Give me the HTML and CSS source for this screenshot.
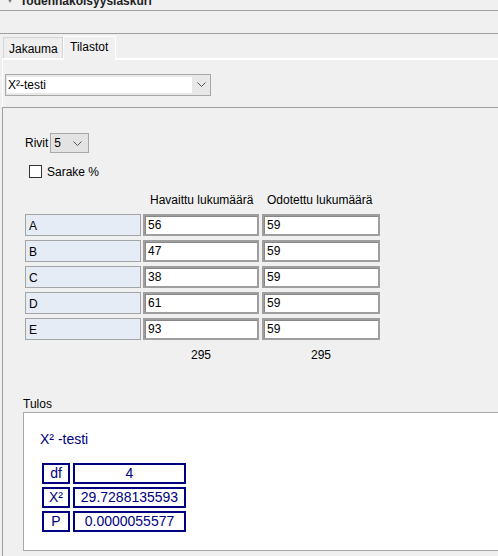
FILE: index.html
```html
<!DOCTYPE html>
<html>
<head>
<meta charset="utf-8">
<link rel="stylesheet" href="styles.css">
</head>
<body>
<div class="app">
  <div class="title"><div class="title-text"><span class="tri">▼</span>Todennäköisyyslaskuri</div></div>
  <div class="toolbar"></div>
  <div class="tabs">
    <div class="tab">Jakauma</div>
    <div class="tab active">Tilastot</div>
  </div>
  <div class="panel">
    <div class="select">
      <div class="select-field">X²-testi</div>
      <div class="select-arrow"><svg width="9" height="5" viewBox="0 0 9 5"><path d="M0.5 0.5 L4.5 4.5 L8.5 0.5" fill="none" stroke="#555" stroke-width="1"/></svg></div>
    </div>
    <div class="inner">
      <div class="rivit-row">
        <span class="lbl">Rivit</span>
        <div class="combo"><span>5</span><svg width="9" height="5" viewBox="0 0 9 5"><path d="M0.5 0.5 L4.5 4.5 L8.5 0.5" fill="none" stroke="#555" stroke-width="1"/></svg></div>
      </div>
      <div class="check-row">
        <span class="checkbox"></span><span>Sarake %</span>
      </div>
      <div class="grid-head">
        <div class="c-label"></div>
        <div class="c-1 head1">Havaittu lukumäärä</div>
        <div class="c-2 head2">Odotettu lukumäärä</div>
      </div>
      <div class="rows">
        <div class="row"><div class="c-label cell-label">A</div><div class="c-1 cell-input">56</div><div class="c-2 cell-input">59</div></div>
        <div class="row"><div class="c-label cell-label">B</div><div class="c-1 cell-input">47</div><div class="c-2 cell-input">59</div></div>
        <div class="row"><div class="c-label cell-label">C</div><div class="c-1 cell-input">38</div><div class="c-2 cell-input">59</div></div>
        <div class="row"><div class="c-label cell-label">D</div><div class="c-1 cell-input">61</div><div class="c-2 cell-input">59</div></div>
        <div class="row"><div class="c-label cell-label">E</div><div class="c-1 cell-input">93</div><div class="c-2 cell-input">59</div></div>
      </div>
      <div class="totals">
        <div class="c-label"></div>
        <div class="c-1 total">295</div>
        <div class="c-2 total">295</div>
      </div>
      <div class="tulos-label">Tulos</div>
      <div class="tulos">
        <div class="res-title">X² -testi</div>
        <div class="res-table">
          <div class="rc">df</div><div class="rc">4</div>
          <div class="rc">X²</div><div class="rc">29.7288135593</div>
          <div class="rc">P</div><div class="rc">0.0000055577</div>
        </div>
      </div>
    </div>
  </div>
</div>
</body>
</html>
```
FILE: styles.css
```css
html, body {
  margin: 0;
  padding: 0;
}
body {
  background: #f0f0f0;
  font-family: "Liberation Sans", Arial, sans-serif;
  font-size: 12px;
  color: #000;
  width: 498px;
  height: 556px;
  overflow: hidden;
}
.app {
  width: 498px;
  height: 556px;
  overflow: hidden;
}
.title {
  height: 10px;
  border-bottom: 1px solid #a0a0a0;
  overflow: hidden;
}
.title-text {
  margin-top: -5px;
  line-height: 12px;
  font-weight: bold;
  font-size: 12px;
  color: #222;
  padding-left: 6px;
}
.tri {
  font-size: 8px;
  color: #777;
  margin-right: 6px;
  vertical-align: 2px;
}
.toolbar {
  height: 22px;
  border-bottom: 1px solid #a0a0a0;
}
.tabs {
  height: 24px;
  display: flex;
  align-items: flex-end;
  padding-left: 3px;
}
.tab {
  height: 20px;
  line-height: 22px;
  padding: 0 5px 0 5px;
  border: 1px solid #d4d4d4;
  border-bottom: none;
  background: #eeeeee;
  width: 48px;
}
.tab.active {
  height: 23px;
  line-height: 20px;
  border-color: #ffffff;
  background: #f0f0f0;
  width: 40px;
  padding: 0 5px 0 6px;
  margin-bottom: -2px;
  position: relative;
}
.panel {
  border-top: 2px solid #ffffff;
  margin-left: 2px;
  border-left: 1px solid #ffffff;
  padding-top: 14px;
}
.select {
  margin-left: 2px;
  width: 204px;
  height: 20px;
  border: 1px solid #a8a8a8;
  background: #e8e8e8;
  display: flex;
  align-items: center;
}
.select-field {
  margin-left: 1px;
  width: 184px;
  height: 16px;
  line-height: 16px;
  background: #ffffff;
  padding-left: 1px;
  font-size: 12px;
}
.select-arrow {
  flex: 1;
  display: flex;
  justify-content: center;
  align-items: center;
  padding-bottom: 1px;
}
.inner {
  margin-top: 11px;
  margin-left: -1px;
  border-top: 1px solid #a0a0a0;
  border-left: 1px solid #a0a0a0;
  padding-left: 22px;
  height: 460px;
}
.rivit-row {
  margin-top: 24px;
  height: 22px;
  display: flex;
  align-items: center;
}
.lbl {
  margin-right: 2px;
}
.combo {
  width: 39px;
  height: 20px;
  border: 1px solid #a8a8a8;
  background: #e3e3e3;
  display: flex;
  align-items: center;
  justify-content: space-between;
  padding: 0 6px 0 3px;
  box-sizing: border-box;
}
.combo span {
  font-size: 12px;
}
.check-row {
  margin-top: 11px;
  height: 13px;
  display: flex;
  align-items: center;
  padding-left: 4px;
  line-height: 16px;
}
.checkbox {
  width: 11px;
  height: 11px;
  border: 1px solid #333;
  background: #fff;
  margin-right: 5px;
}
.grid-head, .row, .totals {
  display: flex;
}
.grid-head {
  margin-top: 15px;
  height: 14px;
  line-height: 14px;
}
.c-label {
  width: 116px;
  box-sizing: border-box;
}
.c-1 {
  width: 116px;
  margin-left: 2px;
  box-sizing: border-box;
}
.c-2 {
  width: 118px;
  margin-left: 3px;
  box-sizing: border-box;
}
.head1 { padding-left: 7px; }
.head2 { padding-left: 5px; }
.rows {
  margin-top: 7px;
  display: flex;
  flex-direction: column;
  gap: 4px;
}
.row {
  height: 22px;
}
.cell-label {
  height: 22px;
  border: 1px solid #a4a4a4;
  background: #e6ecf6;
  line-height: 22px;
  padding-left: 3px;
}
.cell-input {
  height: 22px;
  border: 2px solid #9e9e9e;
  box-shadow: inset 1px 1px 0 #888;
  background: #fff;
  line-height: 19px;
  padding-left: 3px;
}
.totals {
  margin-top: 8px;
  height: 14px;
  line-height: 14px;
}
.total {
  text-align: center;
}
.tulos-label {
  margin-top: 35px;
  margin-left: -2px;
  height: 14px;
  line-height: 14px;
}
.tulos {
  margin-top: 1px;
  margin-left: -2px;
  margin-right: -20px;
  height: 119px;
  border: 1px solid #a8a8a8;
  border-right: none;
  background: #ffffff;
  padding: 18px 0 0 16px;
  box-sizing: content-box;
  color: #000080;
  font-size: 14px;
}
.res-title {
  line-height: 16px;
  height: 16px;
}
.res-table {
  margin-top: 16px;
  margin-left: 2px;
  display: grid;
  grid-template-columns: 28px 113px;
  grid-auto-rows: 21px;
  column-gap: 3px;
  row-gap: 3px;
}
.rc {
  border: 2px solid #000080;
  box-sizing: border-box;
  text-align: center;
  line-height: 17px;
}
```
